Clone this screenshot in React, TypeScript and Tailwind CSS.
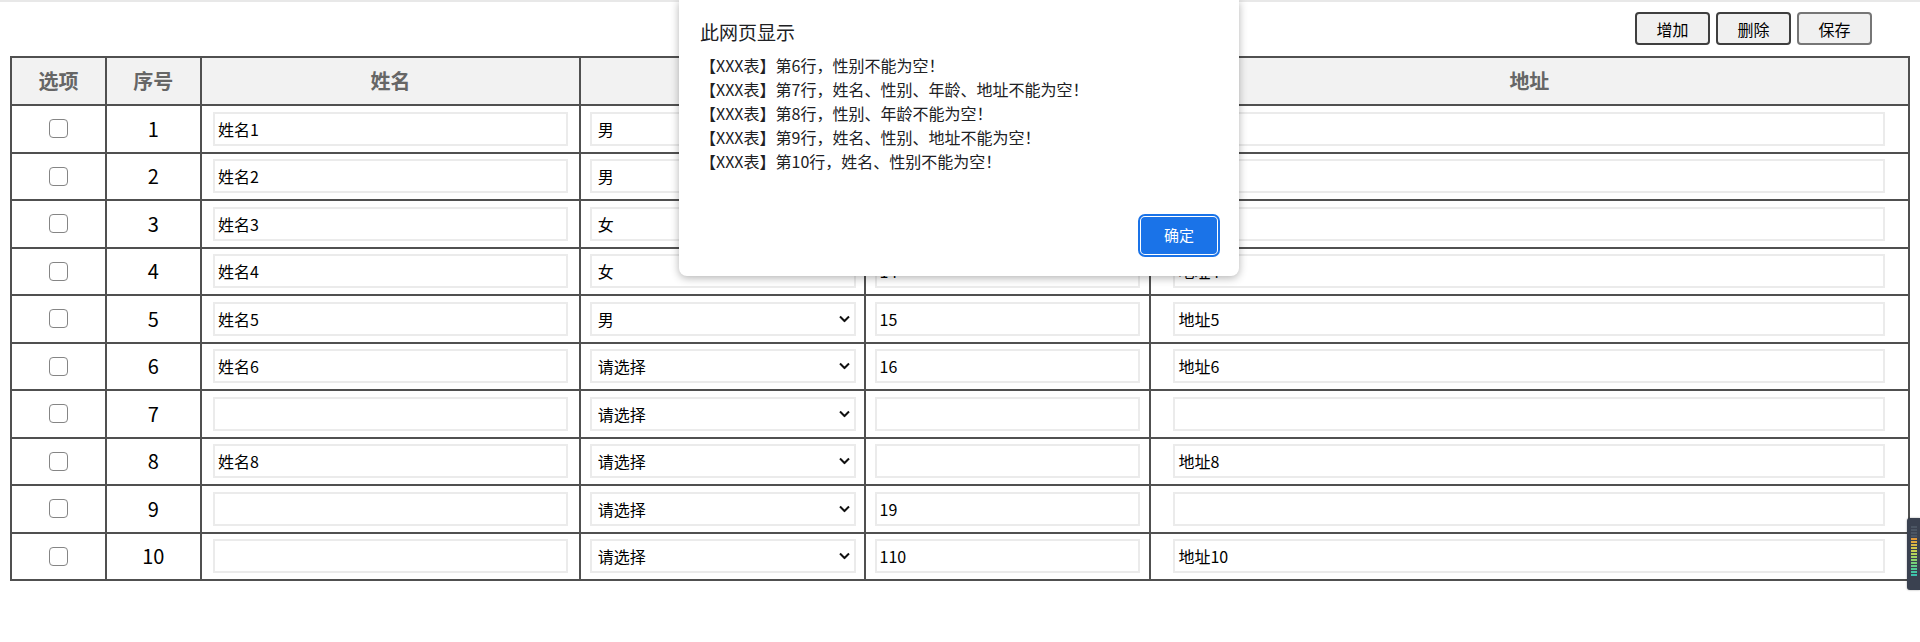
import React from 'react';

type Row = {
  id: number;
  name: string;
  sex: string;
  age: string;
  address: string;
};

const rows: Row[] = [
  { id: 1, name: '姓名1', sex: '男', age: '11', address: '地址1' },
  { id: 2, name: '姓名2', sex: '男', age: '12', address: '地址2' },
  { id: 3, name: '姓名3', sex: '女', age: '13', address: '地址3' },
  { id: 4, name: '姓名4', sex: '女', age: '14', address: '地址4' },
  { id: 5, name: '姓名5', sex: '男', age: '15', address: '地址5' },
  { id: 6, name: '姓名6', sex: '', age: '16', address: '地址6' },
  { id: 7, name: '', sex: '', age: '', address: '' },
  { id: 8, name: '姓名8', sex: '', age: '', address: '地址8' },
  { id: 9, name: '', sex: '', age: '19', address: '' },
  { id: 10, name: '', sex: '', age: '110', address: '地址10' },
];

const messages = [
  '【XXX表】第6行，性别不能为空！',
  '【XXX表】第7行，姓名、性别、年龄、地址不能为空！',
  '【XXX表】第8行，性别、年龄不能为空！',
  '【XXX表】第9行，姓名、性别、地址不能为空！',
  '【XXX表】第10行，姓名、性别不能为空！',
];

// little level meter floating at the right edge
const meterColors = [
  '#4b5563', '#4b5563', '#4b5563', '#4b5563',
  '#e39a3a', '#e0a83c', '#d9b846', '#d3c64c', '#c6cf52', '#b5d35a',
  '#a0d463', '#8bd26d', '#77cf78', '#63cc86', '#52c995', '#45c6a2', '#3cc3ad',
];

const cellInput =
  'block mx-auto w-[94%] h-[34px] border-2 border-[#ebebeb] bg-white px-[3px] text-[16px] text-black outline-none';

function SexSelect({ value }: { value: string }) {
  return (
    <div className="relative mx-auto w-[94%]">
      <select
        defaultValue={value}
        className="block w-full h-[34px] appearance-none border-2 border-[#ebebeb] bg-white pl-[6px] text-[16px] text-black outline-none"
      >
        <option value="">请选择</option>
        <option value="男">男</option>
        <option value="女">女</option>
      </select>
      <svg
        className="pointer-events-none absolute right-[6px] top-1/2 -translate-y-1/2"
        width="11"
        height="7"
        viewBox="0 0 11 7"
        fill="none"
      >
        <path d="M1 1L5.5 5.5L10 1" stroke="#111" strokeWidth="2" />
      </svg>
    </div>
  );
}

export default function App() {
  return (
    <div className="relative min-h-[642px] overflow-hidden bg-white font-['Microsoft_YaHei','Noto_Sans_CJK_SC',sans-serif]">
      <div className="border-t-2 border-[#e8e8e8]" />

      {/* toolbar */}
      <div className="flex justify-end gap-[6px] pr-[48px] pt-[10px]">
        <button className="h-[33px] w-[75px] rounded-[4px] border-2 border-[#3f3f3f] bg-[#f0f0f0] text-[16px] text-black">
          增加
        </button>
        <button className="h-[33px] w-[75px] rounded-[4px] border-2 border-[#3f3f3f] bg-[#f0f0f0] text-[16px] text-black">
          删除
        </button>
        <button className="h-[33px] w-[75px] rounded-[4px] border-2 border-[#767676] bg-[#f0f0f0] text-[16px] text-black">
          保存
        </button>
      </div>

      {/* table */}
      <div className="px-[10px] pt-[11px]">
        <table className="w-full table-fixed border-collapse border-2 border-[#505050]">
          <colgroup>
            <col className="w-[5%]" />
            <col className="w-[5%]" />
            <col className="w-[20%]" />
            <col className="w-[15%]" />
            <col className="w-[15%]" />
            <col className="w-[40%]" />
          </colgroup>
          <thead>
            <tr className="h-[48px] bg-[#f2f2f2] text-[20px] font-bold text-[#666]">
              <th className="border-2 border-[#505050]">选项</th>
              <th className="border-2 border-[#505050]">序号</th>
              <th className="border-2 border-[#505050]">姓名</th>
              <th className="border-2 border-[#505050]">性别</th>
              <th className="border-2 border-[#505050]">年龄</th>
              <th className="border-2 border-[#505050]">地址</th>
            </tr>
          </thead>
          <tbody>
            {rows.map((r) => (
              <tr key={r.id} className="h-[47.5px]">
                <td className="border-2 border-[#505050] text-center">
                  <input
                    type="checkbox"
                    className="block mx-auto h-[19px] w-[19px] appearance-none rounded-[4px] border-[1.5px] border-[#858585] bg-white"
                  />
                </td>
                <td className="border-2 border-[#505050] text-center text-[20px] text-black">{r.id}</td>
                <td className="border-2 border-[#505050]">
                  <input type="text" defaultValue={r.name} className={cellInput} />
                </td>
                <td className="border-2 border-[#505050]">
                  <SexSelect value={r.sex} />
                </td>
                <td className="border-2 border-[#505050]">
                  <input type="text" defaultValue={r.age} className={cellInput} />
                </td>
                <td className="border-2 border-[#505050]">
                  <input type="text" defaultValue={r.address} className={cellInput} />
                </td>
              </tr>
            ))}
          </tbody>
        </table>
      </div>

      {/* browser alert dialog */}
      <div className="absolute left-[679px] top-0 flex w-[560px] flex-col rounded-b-[8px] bg-white px-[21px] pb-[22px] pt-[20px] shadow-[0_2px_8px_rgba(0,0,0,0.3)]">
        <div className="text-[19px] leading-[24px] text-[#202124]">此网页显示</div>
        <div className="mt-[9px] text-[16px] leading-[24px] text-[#202124]">
          {messages.map((m) => (
            <div key={m}>{m}</div>
          ))}
        </div>
        <div className="mt-[44px] flex justify-end pr-[1px]">
          <button className="h-[37px] w-[76px] rounded-[4px] bg-[#1a73e8] text-[15px] text-white outline-2 outline-offset-[1px] outline-[#1a73e8]">
            确定
          </button>
        </div>
      </div>

      {/* floating meter widget */}
      <div className="absolute left-[1907px] top-[518px] flex h-[72px] w-[13px] flex-col items-center gap-[1px] rounded-l-[3px] bg-[#3a4150] pt-[8px] shadow-[0_0_2px_rgba(0,0,0,0.4)]">
        {meterColors.map((c, i) => (
          <div key={i} className="h-[2px] w-[6px]" style={{ backgroundColor: c }} />
        ))}
      </div>
    </div>
  );
}
